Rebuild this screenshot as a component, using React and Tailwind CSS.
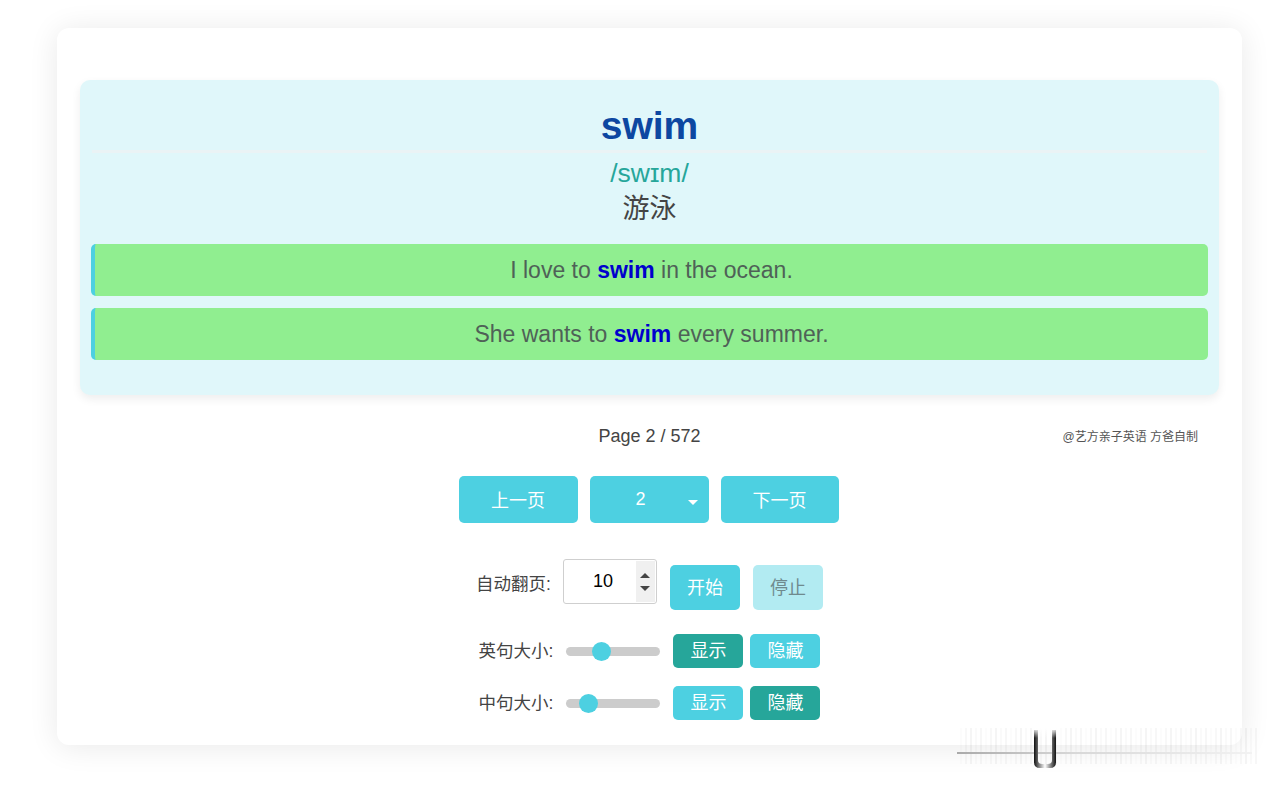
import React from "react";

const font = "font-['Liberation_Sans','Noto_Sans_CJK_SC',sans-serif]";

function Slider({ pos }) {
  return (
    <div className="relative w-[94px] h-[19px] flex items-center">
      <div className="w-full h-[9px] rounded-full bg-[#cccccc]" />
      <div
        className="absolute top-0 w-[19px] h-[19px] rounded-full bg-[#4dd0e1]"
        style={{ left: pos - 9.5 }}
      />
    </div>
  );
}

function Sentence({ pre, post }) {
  return (
    <div className="h-[52px] rounded-[5px] bg-[#90ee90] border-l-[4px] border-[#4dd0e1] flex items-center justify-center text-[23px] text-[#4f6157]">
      <span>
        {pre}
        <b className="text-[#0000cd]">swim</b>
        {post}
      </span>
    </div>
  );
}

function Artifact() {
  const stripes = [];
  for (let i = 0; i < 60; i++) {
    const x = 960 + i * 5;
    stripes.push(
      <rect key={i} x={x} y={728} width={2} height={36} fill="#000" opacity={0.012 + ((i * 7) % 5) * 0.007} />
    );
  }
  return (
    <svg className="absolute left-0 top-0 pointer-events-none" width="1280" height="789">
      <defs>
        <linearGradient id="ln" x1="0" x2="1" y1="0" y2="0">
          <stop offset="0" stopColor="#aaa" />
          <stop offset="0.4" stopColor="#d8d8d8" />
          <stop offset="1" stopColor="#f2f2f2" />
        </linearGradient>
        <linearGradient id="tube" x1="0" x2="1" y1="0" y2="0">
          <stop offset="0" stopColor="#111" />
          <stop offset="0.25" stopColor="#888" />
          <stop offset="0.5" stopColor="#fff" />
          <stop offset="0.75" stopColor="#888" />
          <stop offset="1" stopColor="#111" />
        </linearGradient>
        <linearGradient id="fade" x1="0" x2="0" y1="0" y2="1">
          <stop offset="0" stopColor="#fff" stopOpacity="1" />
          <stop offset="0.5" stopColor="#fff" stopOpacity="0" />
        </linearGradient>
      </defs>
      {stripes}
      <rect x="957" y="752" width="295" height="2" fill="url(#ln)" />
      <path d="M1034 730 L1034 762 Q1034 768 1040 768 L1050 768 Q1056 768 1056 762 L1056 730 L1052 730 L1052 760 Q1052 764 1048 764 L1042 764 Q1038 764 1038 760 L1038 730 Z" fill="url(#tube)" />
      <rect x="1032" y="728" width="26" height="20" fill="url(#fade)" />
    </svg>
  );
}

export default function App() {
  return (
    <div className={`relative w-[1280px] h-[789px] bg-white overflow-hidden ${font}`}>
      <div className="mt-[28px] ml-[57px] w-[1185px] bg-white rounded-[12px] shadow-[0_2px_30px_rgba(0,0,0,0.09)] pt-[52px] px-[23px] pb-[25px]">
        <div className="bg-[#e0f7fa] rounded-[10px] shadow-[0_4px_10px_rgba(0,0,0,0.07)] px-[11px] pt-[24px] pb-[35px]">
          <div className="text-center text-[39px] leading-[44px] font-bold text-[#0d47a1]">swim</div>
          <div className="mt-[2px] mx-[1px] h-[3px] bg-[#eaf3f5]" />
          <div className="mt-[5px] text-center text-[26.5px] leading-[30px] text-[#26a69a]">/swɪm/</div>
          <div className="mt-[4px] text-center text-[27px] leading-[34px] text-[#444]">游泳</div>
          <div className="mt-[18px] flex flex-col gap-[12px]">
            <Sentence pre="I love to " post=" in the ocean." />
            <Sentence pre="She wants to " post=" every summer." />
          </div>
        </div>

        <div className="mt-[29px] grid grid-cols-[1fr_auto_1fr] items-center">
          <div />
          <div className="text-[18px] leading-[24px] text-[#444]">Page 2 / 572</div>
          <div className="justify-self-end pr-[21px] pt-[2px] text-[12px] text-[#555]">@艺方亲子英语 方爸自制</div>
        </div>

        <div className="mt-[28px] flex justify-center gap-[12px] pr-[2px]">
          <button className="w-[119px] h-[47px] rounded-[5px] bg-[#4dd0e1] text-white text-[18px] pt-[3px]">上一页</button>
          <div className="relative w-[119px] h-[47px] rounded-[5px] bg-[#4dd0e1] text-white text-[18px] flex items-center">
            <span className="ml-[46px]">2</span>
            <span className="absolute left-[98px] top-[24px] w-0 h-0 border-l-[5px] border-r-[5px] border-t-[5px] border-l-transparent border-r-transparent border-t-white" />
          </div>
          <button className="w-[118px] h-[47px] rounded-[5px] bg-[#4dd0e1] text-white text-[18px] pt-[3px]">下一页</button>
        </div>

        <div className="mt-[36px] flex justify-center items-start">
          <div className="h-[50px] flex items-center text-[17.5px] text-[#444]">自动翻页:</div>
          <div className="ml-[12px] w-[94px] h-[45px] border border-[#cfcfcf] rounded-[3px] bg-white flex">
            <div className="flex-1 flex items-center justify-end pr-[23px] text-[18px] text-black">10</div>
            <div className="w-[19px] my-[1px] mr-[1px] bg-[#f0f0f0] flex flex-col items-center justify-center gap-[8px]">
              <span className="w-0 h-0 border-l-[5px] border-r-[5px] border-b-[5px] border-l-transparent border-r-transparent border-b-[#444]" />
              <span className="w-0 h-0 border-l-[5px] border-r-[5px] border-t-[5px] border-l-transparent border-r-transparent border-t-[#444]" />
            </div>
          </div>
          <button className="ml-[13px] mt-[6px] w-[70px] h-[45px] rounded-[5px] bg-[#4dd0e1] text-white text-[18px] pt-[2px]">开始</button>
          <button className="ml-[13px] mt-[6px] w-[70px] h-[45px] rounded-[5px] bg-[#b2ebf2] text-[#6f8a8e] text-[18px] pt-[2px]">停止</button>
        </div>

        <div className="mt-[24px] flex justify-center items-center">
          <div className="text-[17.5px] text-[#444]">英句大小:</div>
          <div className="ml-[13px]"><Slider pos={35} /></div>
          <button className="ml-[13px] w-[70px] h-[34px] rounded-[5px] bg-[#26a69a] text-white text-[18px] pt-[1px]">显示</button>
          <button className="ml-[7px] w-[70px] h-[34px] rounded-[5px] bg-[#4dd0e1] text-white text-[18px] pt-[1px]">隐藏</button>
        </div>

        <div className="mt-[18px] flex justify-center items-center">
          <div className="text-[17.5px] text-[#444]">中句大小:</div>
          <div className="ml-[13px]"><Slider pos={22} /></div>
          <button className="ml-[13px] w-[70px] h-[34px] rounded-[5px] bg-[#4dd0e1] text-white text-[18px] pt-[1px]">显示</button>
          <button className="ml-[7px] w-[70px] h-[34px] rounded-[5px] bg-[#26a69a] text-white text-[18px] pt-[1px]">隐藏</button>
        </div>
      </div>
      <Artifact />
    </div>
  );
}
